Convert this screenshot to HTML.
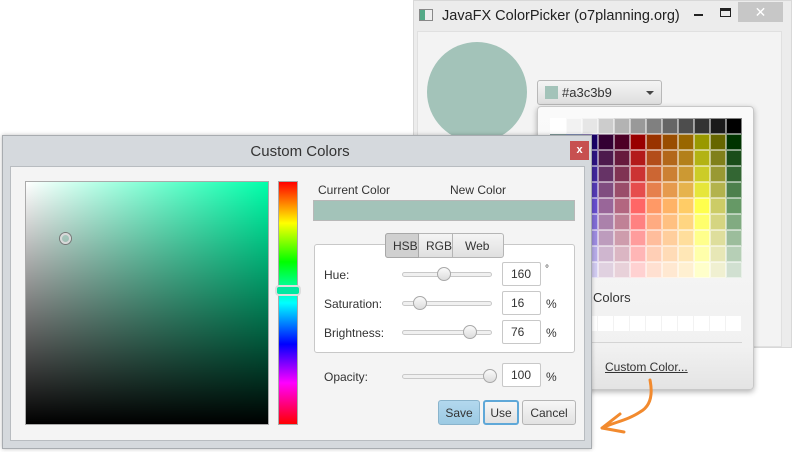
<!DOCTYPE html>
<html><head><style>
*{box-sizing:border-box;margin:0;padding:0}
body{width:792px;height:452px;background:#fff;position:relative;overflow:hidden;font-family:"Liberation Sans",sans-serif;font-size:12px;color:#333}
.a{position:absolute}
.tf{position:absolute;background:#fff;border:1px solid #c8c8c8;border-radius:2px;height:24px;width:39px;padding:4px 0 0 8px;font-size:12px}
.sl{position:absolute;height:5px;width:90px;border:1px solid #c8c8c8;border-radius:3px;background:#f0f0f0}
.th{position:absolute;width:14px;height:14px;border-radius:50%;border:1px solid #a8a8a8;background:linear-gradient(#fafafa,#dcdcdc);top:-6px}
.btn{position:absolute;top:400px;height:25px;border:1px solid #b5b5b5;border-radius:3px;background:linear-gradient(#f6f6f6,#e2e2e2);text-align:center;padding-top:5px;font-size:12px}
</style></head><body>
<div class="a" style="left:413px;top:0;width:379px;height:348px;background:#ececec;border:1px solid #d8d8d8"></div>
<div class="a" style="left:419px;top:9px;width:14px;height:12px;border:1px solid #888;background:linear-gradient(90deg,#5a8 0,#5a8 40%,#eee 40%)"></div>
<div class="a" style="left:442px;top:8px;font-size:14.5px;color:#222">JavaFX ColorPicker (o7planning.org)</div>
<div class="a" style="left:694px;top:14px;width:9px;height:2px;background:#222"></div>
<div class="a" style="left:720px;top:8px;width:11px;height:9px;border:1px solid #222;border-top-width:3px"></div>
<div class="a" style="left:738px;top:2px;width:45px;height:20px;background:#c7c7c7;color:#fff;text-align:center;font-size:14px;line-height:20px">✕</div>
<div class="a" style="left:417px;top:31px;width:365px;height:316px;background:#f3f3f3;border:1px solid #e0e0e0"></div>
<div class="a" style="left:427px;top:42px;width:100px;height:100px;border-radius:50%;background:#a3c3b9"></div>
<div class="a" style="left:537px;top:80px;width:125px;height:25px;border:1px solid #b8b8b8;border-radius:3px;background:linear-gradient(#f4f4f4,#dedede)"></div>
<div class="a" style="left:545px;top:86px;width:13px;height:13px;background:#a3c3b9"></div>
<div class="a" style="left:562px;top:85px;font-size:13px;color:#333">#a3c3b9</div>
<div class="a" style="left:646px;top:91px;width:0;height:0;border-left:4px solid transparent;border-right:4px solid transparent;border-top:4px solid #444"></div>
<div class="a" style="left:537px;top:106px;width:217px;height:284px;border:1px solid #c8c8c8;border-radius:4px;background:linear-gradient(#fafafa,#f1f1f1 85%,#e4e4e4);box-shadow:0 2px 6px rgba(0,0,0,.3)"></div>
<div id="grid" class="a" style="left:550px;top:118px;width:192px;height:160px"></div>
<div class="a" style="left:593px;top:290px;font-size:13px">Colors</div>
<div id="cust" class="a" style="left:550px;top:316px;width:192px;height:16px"></div>
<div class="a" style="left:550px;top:342px;width:192px;height:1px;background:#d4d4d4"></div>
<div class="a" style="left:605px;top:360px;font-size:12px;text-decoration:underline;color:#333">Custom Color...</div>
<svg class="a" style="left:590px;top:370px" width="80" height="70"><path d="M60 10 C62 20 63 35 50 42 C38 50 25 52 12 58 M12 58 L30 44 M12 58 L34 62" stroke="#f28a2e" stroke-width="3" fill="none" stroke-linecap="round"/></svg>
<div class="a" style="left:2px;top:135px;width:590px;height:314px;background:#d5d9dd;border:1px solid #a8acb0;box-shadow:0 0 4px rgba(0,0,0,.25)"></div>
<div class="a" style="left:2px;top:143px;width:596px;text-align:center;font-size:15px;color:#333">Custom Colors</div>
<div class="a" style="left:570px;top:141px;width:19px;height:19px;background:#c75050;color:#fff;text-align:center;font-size:11px;line-height:18px;font-weight:bold">x</div>
<div class="a" style="left:10px;top:166px;width:575px;height:275px;background:#f4f4f4;border:1px solid #b8bcc0"></div>
<div class="a" style="left:25px;top:181px;width:244px;height:244px;border:1px solid #aaa;background:linear-gradient(to bottom,rgba(0,0,0,0),#000),linear-gradient(to right,#fff,#00ffaa)"></div>
<div class="a" style="left:60px;top:233px;width:11px;height:11px;border-radius:50%;border:2px solid #d8d8d8;box-shadow:0 0 0 1px #777"></div>
<div class="a" style="left:278px;top:181px;width:20px;height:244px;border:1px solid #aaa;background:linear-gradient(#f00,#ff0 17%,#0f0 33%,#0ff 50%,#00f 67%,#f0f 83%,#f00)"></div>
<div class="a" style="left:275px;top:285px;width:26px;height:11px;border-radius:4px;border:2px solid #ddd;background:#00e8a0"></div>
<div class="a" style="left:318px;top:183px;font-size:12px">Current Color</div>
<div class="a" style="left:450px;top:183px;font-size:12px">New Color</div>
<div class="a" style="left:313px;top:200px;width:262px;height:21px;background:#a3c3b9;border:1px solid #b8b8b8"></div>
<div class="a" style="left:314px;top:244px;width:261px;height:109px;background:#fff;border:1px solid #c8c8c8;border-radius:3px"></div>
<div class="a" style="left:385px;top:233px;width:119px;height:25px;border:1px solid #b5b5b5;border-radius:3px;background:linear-gradient(#f4f4f4,#e0e0e0)"></div>
<div class="a" style="left:385px;top:233px;width:34px;height:25px;border:1px solid #a8a8a8;border-radius:3px 0 0 3px;background:#d0d0d0"></div>
<div class="a" style="left:452px;top:233px;width:1px;height:25px;background:#b5b5b5"></div>
<div class="a" style="left:393px;top:239px">HSB</div><div class="a" style="left:426px;top:239px">RGB</div><div class="a" style="left:465px;top:239px">Web</div>
<div class="a" style="left:324px;top:268px">Hue:</div>
<div class="a" style="left:324px;top:297px">Saturation:</div>
<div class="a" style="left:324px;top:326px">Brightness:</div>
<div class="a" style="left:324px;top:370px">Opacity:</div>
<div class="sl" style="left:402px;top:272px"><div class="th" style="left:34px"></div></div>
<div class="sl" style="left:402px;top:301px"><div class="th" style="left:10px"></div></div>
<div class="sl" style="left:402px;top:330px"><div class="th" style="left:60px"></div></div>
<div class="sl" style="left:402px;top:374px"><div class="th" style="left:80px"></div></div>
<div class="tf" style="left:502px;top:262px">160</div>
<div class="tf" style="left:502px;top:291px">16</div>
<div class="tf" style="left:502px;top:320px">76</div>
<div class="tf" style="left:502px;top:363px">100</div>
<div class="a" style="left:545px;top:264px;font-size:10px">°</div>
<div class="a" style="left:546px;top:297px">%</div>
<div class="a" style="left:546px;top:326px">%</div>
<div class="a" style="left:546px;top:370px">%</div>
<div class="btn" style="left:438px;width:42px;background:linear-gradient(#b3d8ee,#9ccae3);border-color:#8ab4cc">Save</div>
<div class="btn" style="left:483px;width:36px;border:2px solid #5fa8d8;padding-top:4px">Use</div>
<div class="btn" style="left:522px;width:54px">Cancel</div>
<script>
var g=document.getElementById('grid'),h='';
var gr=['#fff','#f2f2f2','#e6e6e6','#ccc','#b3b3b3','#999','#808080','#666','#4d4d4d','#333','#1a1a1a','#000'];
var dark=[[0,51,51],[0,26,102],[26,0,104],[51,0,51],[77,0,38],[153,0,0],[153,51,0],[153,77,0],[153,102,0],[153,153,0],[102,102,0],[0,51,0]];
var mid=[[51,153,153],[51,102,204],[102,77,204],[153,102,153],[179,102,128],[255,102,102],[255,153,102],[255,179,102],[255,204,102],[255,255,77],[204,204,102],[102,153,102]];
for(var c=0;c<12;c++)h+='<div style="position:absolute;left:'+c*16+'px;top:0;width:16px;height:16px;background:'+gr[c]+';border:1px solid rgba(255,255,255,.5)"></div>';
for(var r=1;r<10;r++)for(var c=0;c<12;c++){var col;if(r<=5){var t=(r-1)/4;col=dark[c].map(function(v,i){return Math.round(v+(mid[c][i]-v)*t)})}else{var t=(r-5)/4*0.7;col=mid[c].map(function(v){return Math.round(v+(255-v)*t)})}
h+='<div style="position:absolute;left:'+c*16+'px;top:'+r*16+'px;width:16px;height:16px;background:rgb('+col+');border:1px solid rgba(255,255,255,.5)"></div>';}
g.innerHTML=h;var cu='';for(var c=0;c<12;c++)cu+='<div style="position:absolute;left:'+c*16+'px;top:0;width:15px;height:15px;background:#fff"></div>';document.getElementById('cust').innerHTML=cu;
</script>
</body></html>
